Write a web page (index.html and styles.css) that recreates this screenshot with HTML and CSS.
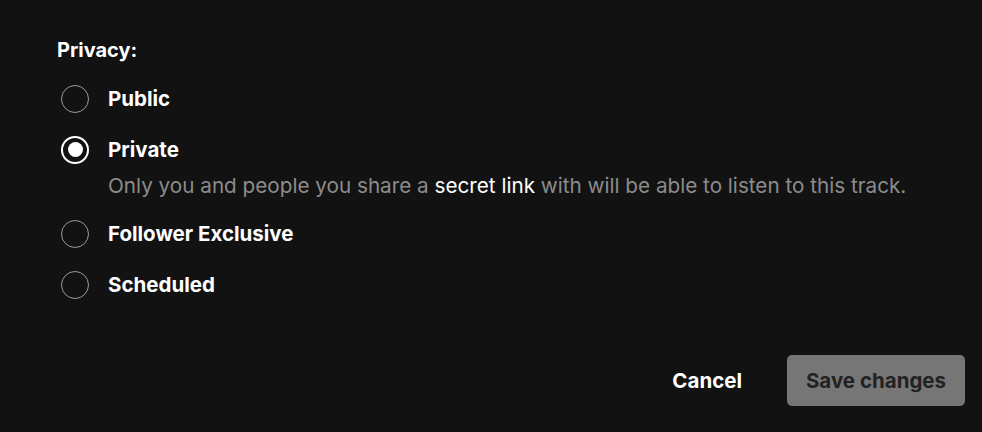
FILE: index.html
```html
<!DOCTYPE html>
<html>
<head>
<meta charset="utf-8">
<link rel="stylesheet" href="styles.css">
</head>
<body>
<div class="panel">
  <div class="title">Privacy:</div>
  <div class="options">
    <label class="option">
      <span class="radio"></span>
      <span class="label">Public</span>
    </label>
    <label class="option">
      <span class="radio checked"></span>
      <span class="label">Private</span>
    </label>
    <div class="desc">Only you and people you share a <span class="hl">secret link</span> with will be able to listen to this track.</div>
    <label class="option">
      <span class="radio"></span>
      <span class="label">Follower Exclusive</span>
    </label>
    <label class="option">
      <span class="radio"></span>
      <span class="label">Scheduled</span>
    </label>
  </div>
  <div class="actions">
    <button class="cancel">Cancel</button>
    <button class="save">Save changes</button>
  </div>
</div>
</body>
</html>
```
FILE: styles.css
```css
html, body {
  margin: 0;
  padding: 0;
  background: #121212;
}
body {
  font-family: Inter, "Noto Sans", sans-serif;
  color: #fff;
  width: 982px;
  height: 432px;
  overflow: hidden;
}
.panel {
  padding: 37px 17px 0 57px;
}
.title {
  font-size: 20px;
  font-weight: 700;
  line-height: 26px;
}
.options {
  display: flex;
  flex-direction: column;
  margin-top: 10px;
}
.option {
  display: flex;
  align-items: center;
  height: 51px;
  gap: 19px;
  margin-left: 4px;
}
.radio {
  width: 28px;
  height: 28px;
  border: 1.5px solid #9a9a9a;
  border-radius: 50%;
  box-sizing: border-box;
  display: flex;
  align-items: center;
  justify-content: center;
  flex: none;
}
.radio.checked {
  border: 2px solid #fff;
}
.radio.checked::after {
  content: "";
  width: 15px;
  height: 15px;
  border-radius: 50%;
  background: #fff;
}
.label {
  font-size: 20.5px;
  font-weight: 700;
}
.desc {
  margin: -2px 0 0 51px;
  font-size: 20.7px;
  line-height: 26px;
  color: #8c8c8c;
  padding-bottom: 9px;
  white-space: nowrap;
}
.desc .hl {
  color: #fff;
}
.actions {
  display: flex;
  justify-content: flex-end;
  align-items: center;
  gap: 45px;
  margin-top: 45px;
}
button {
  font-family: inherit;
  font-size: 20.5px;
  font-weight: 700;
  border: none;
  cursor: pointer;
}
.cancel {
  background: none;
  color: #fff;
  padding: 0;
}
.save {
  background: #767676;
  color: #222;
  width: 178px;
  height: 51px;
  border-radius: 5px;
}
```
